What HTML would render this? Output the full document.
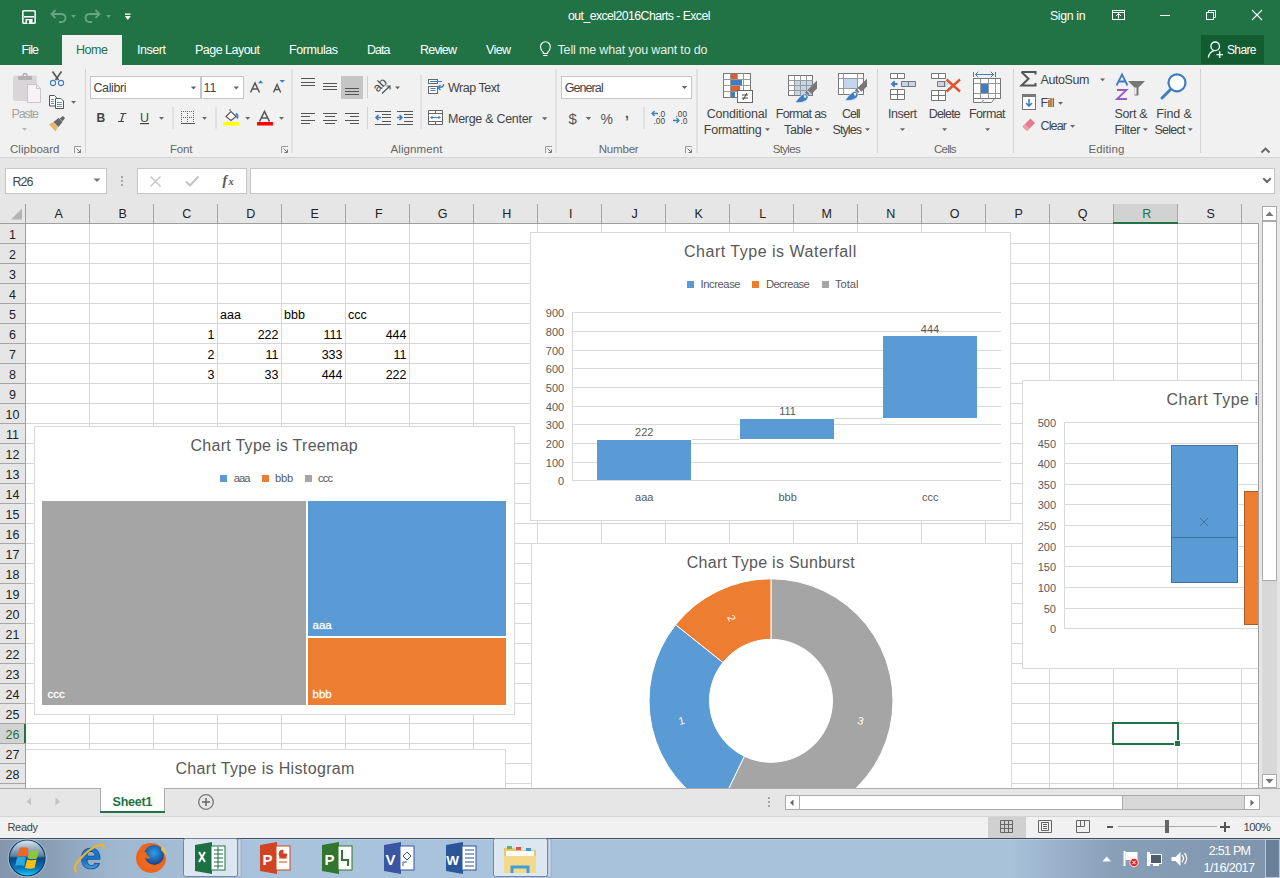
<!DOCTYPE html><html><head><meta charset="utf-8"><style>
*{margin:0;padding:0;box-sizing:border-box}
html,body{width:1280px;height:878px;overflow:hidden;background:#fff;font-family:"Liberation Sans",sans-serif;color:#444}
.a{position:absolute}
.t{position:absolute;white-space:nowrap;line-height:1}
</style></head><body><div class="a" style="left:0px;top:0px;width:1280px;height:65px;background:#217346"></div>
<div class="t" style="left:568.00px;top:10.00px;font-size:12.3px;color:#fff;letter-spacing:-0.568px;">out_excel2016Charts - Excel</div>
<div class="t" style="left:1050.00px;top:10.00px;font-size:12.3px;color:#fff;letter-spacing:-0.352px;">Sign in</div>
<div class="a" style="left:62px;top:35px;width:60px;height:30px;background:#f1f1f1"></div>
<div class="t" style="left:21.50px;top:44.00px;font-size:12.5px;color:#fff;letter-spacing:-0.881px;">File</div>
<div class="t" style="left:76.00px;top:44.00px;font-size:12.5px;color:#217346;letter-spacing:-0.448px;">Home</div>
<div class="t" style="left:137.00px;top:44.00px;font-size:12.5px;color:#fff;letter-spacing:-0.453px;">Insert</div>
<div class="t" style="left:195.00px;top:44.00px;font-size:12.5px;color:#fff;letter-spacing:-0.520px;">Page Layout</div>
<div class="t" style="left:289.00px;top:44.00px;font-size:12.5px;color:#fff;letter-spacing:-0.442px;">Formulas</div>
<div class="t" style="left:367.00px;top:44.00px;font-size:12.5px;color:#fff;letter-spacing:-0.968px;">Data</div>
<div class="t" style="left:420.00px;top:44.00px;font-size:12.5px;color:#fff;letter-spacing:-0.797px;">Review</div>
<div class="t" style="left:486.00px;top:44.00px;font-size:12.5px;color:#fff;letter-spacing:-0.623px;">View</div>
<div class="t" style="left:557.50px;top:44.00px;font-size:12.5px;color:#e6efe9;letter-spacing:-0.163px;">Tell me what you want to do</div>
<div class="a" style="left:1201px;top:35px;width:63px;height:29px;background:#115c31"></div>
<div class="t" style="left:1227.00px;top:44.00px;font-size:12px;color:#fff;letter-spacing:-0.631px;">Share</div>
<svg class="a" style="left:0;top:0" width="1280" height="65"><rect x="22.8" y="10.8" width="12.4" height="12.4" rx="1" fill="none" stroke="#fff" stroke-width="1.6"/><rect x="24" y="16" width="10" height="1.6" fill="#fff"/><rect x="25.5" y="19" width="7" height="4.5" fill="#fff"/><rect x="27" y="20.3" width="2" height="3.2" fill="#217346"/><path d="M52 14h9q4.5 0 4.5 4t-4.5 4h-2" stroke="#65a583" stroke-width="1.8" fill="none"/><path d="M55.5 10l-4 4l4 4" stroke="#65a583" stroke-width="1.8" fill="none"/><path d="M71 15h5l-2.5 3z" fill="#65a583"/><path d="M99 14h-9q-4.5 0-4.5 4t4.5 4h2" stroke="#65a583" stroke-width="1.8" fill="none"/><path d="M95.5 10l4 4l-4 4" stroke="#65a583" stroke-width="1.8" fill="none"/><path d="M106 15h5l-2.5 3z" fill="#65a583"/><rect x="125" y="13.5" width="5.5" height="1.3" fill="#fff"/><path d="M124.8 16h6l-3 4z" fill="#fff"/><path d="M543.3 52.5q-2.8-2.6-2.8-5.8a4.9 4.9 0 0 1 9.8 0q0 3.2-2.8 5.8v1h-4.2z" fill="none" stroke="#fff" stroke-width="1.1"/><path d="M543.3 55.5h4.2" stroke="#fff" stroke-width="1.1"/><rect x="1112.5" y="10.5" width="12" height="9" fill="none" stroke="#fff"/><rect x="1112" y="12" width="13" height="1" fill="#fff"/><path d="M1118.5 18.5v-5m-2.5 2.5l2.5-2.5l2.5 2.5" stroke="#fff" fill="none"/><rect x="1160" y="15" width="10" height="1" fill="#fff"/><rect x="1206.5" y="12.5" width="7" height="7" fill="none" stroke="#fff"/><path d="M1208.5 12.5v-2h7v7h-2" fill="none" stroke="#fff"/><path d="M1252 10l10 10M1262 10l-10 10" stroke="#fff" stroke-width="1.1"/><circle cx="1215.2" cy="46.3" r="4.3" fill="none" stroke="#fff" stroke-width="1.3"/><path d="M1208.3 57.6q0.8-5.5 5.8-7" fill="none" stroke="#fff" stroke-width="1.3"/><path d="M1216.5 54.6h6.5M1219.7 51.3v6.7" stroke="#fff" stroke-width="1.3"/></svg>
<div class="a" style="left:0px;top:65px;width:1280px;height:92px;background:#f1f1f1"></div>
<div class="a" style="left:0px;top:157px;width:1280px;height:1px;background:#d4d4d4"></div>
<svg class="a" style="left:0;top:0" width="1280" height="878"><rect x="85.0" y="69" width="1" height="84" fill="#d2d2d2"/><rect x="291.5" y="69" width="1" height="84" fill="#d2d2d2"/><rect x="555.5" y="69" width="1" height="84" fill="#d2d2d2"/><rect x="696.5" y="69" width="1" height="84" fill="#d2d2d2"/><rect x="877.0" y="69" width="1" height="84" fill="#d2d2d2"/><rect x="1013.0" y="69" width="1" height="84" fill="#d2d2d2"/><rect x="1200.0" y="69" width="1" height="84" fill="#d2d2d2"/><path d="M74.5 153v-6.5h6.5" stroke="#999" fill="none" stroke-width="1"/><path d="M76.5 148.5l4 4m0 -3v3h-3" stroke="#777" fill="none" stroke-width="1"/><path d="M281.5 153v-6.5h6.5" stroke="#999" fill="none" stroke-width="1"/><path d="M283.5 148.5l4 4m0 -3v3h-3" stroke="#777" fill="none" stroke-width="1"/><path d="M545.5 153v-6.5h6.5" stroke="#999" fill="none" stroke-width="1"/><path d="M547.5 148.5l4 4m0 -3v3h-3" stroke="#777" fill="none" stroke-width="1"/><path d="M685.5 153v-6.5h6.5" stroke="#999" fill="none" stroke-width="1"/><path d="M687.5 148.5l4 4m0 -3v3h-3" stroke="#777" fill="none" stroke-width="1"/><rect x="13" y="75.5" width="24" height="25.5" rx="2" fill="#d9d5d9"/><rect x="18" y="76" width="14" height="4" rx="1" fill="#b3b0b3"/><rect x="22.5" y="73" width="5" height="4" rx="1.5" fill="#b3b0b3"/><rect x="24" y="74.5" width="2" height="1.5" fill="#eee"/><path d="M27.5 84.5h9l4 4v14h-13z" fill="#f6f2f6" stroke="#c9c5c9" stroke-width="1"/><path d="M36.5 84.5v4h4" fill="none" stroke="#c9c5c9"/><path d="M22.00 128.00h5l-2.50 2.75z" fill="#b8b8b8"/><path d="M52.5 71.5L58.5 80M61.5 71.5L55.5 80" stroke="#555" stroke-width="1.6" fill="none"/><circle cx="53" cy="83" r="2.6" stroke="#3e7cc4" stroke-width="1.1" fill="none"/><circle cx="61" cy="83" r="2.6" stroke="#3e7cc4" stroke-width="1.1" fill="none"/><path d="M49.5 95.5h5l2 2v8.5h-7z" fill="#fff" stroke="#555"/><path d="M55.5 98.5h5.5l2.5 2.5v7.5h-8z" fill="#fff" stroke="#555"/><path d="M51 99.5h3M51 101.5h3M51 103.5h3M57 102.5h5M57 104.5h5M57 106.5h5" stroke="#3e7cc4" stroke-width="0.8"/><path d="M71.10 101.00h5l-2.50 2.75z" fill="#666"/><path d="M49 124.5l4-2.5l5 5l-2.5 4.5z" fill="#e7b66c"/><path d="M53.5 122l5-4l4 4l-4 5z" fill="#666"/><path d="M59.5 118.5l3.5-2.5l2 2l-2.5 3.5z" fill="#666"/><rect x="90.5" y="76.5" width="110" height="22" fill="#fff" stroke="#c6c6c6"/><rect x="201.5" y="76.5" width="42" height="22" fill="#fff" stroke="#c6c6c6"/><path d="M190.75 86.50h5.5l-2.75 3.03z" fill="#666"/><path d="M233.55 86.50h5.5l-2.75 3.03z" fill="#666"/><path d="M250.5 92.5l4.5-9.5l4.5 9.5M252.3 89h5.4" stroke="#555" stroke-width="1.5" fill="none"/><path d="M258 83.2l2.6-3l2.6 3z" fill="#3e7cc4"/><path d="M273.5 92.5l3.6-8l3.6 8M275 89.5h4.4" stroke="#555" stroke-width="1.4" fill="none"/><path d="M279.5 80h5.5l-2.75 2.8z" fill="#3e7cc4"/><path d="M120.5 113.5h6M118 121.5h6M123.5 113.5l-2.5 8" stroke="#444" stroke-width="1.2" fill="none"/><rect x="140" y="123" width="9" height="1.2" fill="#444"/><path d="M159.00 117.00h5l-2.50 2.75z" fill="#666"/><rect x="172.5" y="107" width="1" height="22" fill="#d2d2d2"/><rect x="215.5" y="107" width="1" height="22" fill="#d2d2d2"/><rect x="181" y="111" width="1" height="1" fill="#666"/><rect x="181" y="117" width="1" height="1" fill="#666"/><rect x="183" y="111" width="1" height="1" fill="#666"/><rect x="183" y="117" width="1" height="1" fill="#666"/><rect x="185" y="111" width="1" height="1" fill="#666"/><rect x="185" y="117" width="1" height="1" fill="#666"/><rect x="187" y="111" width="1" height="1" fill="#666"/><rect x="187" y="117" width="1" height="1" fill="#666"/><rect x="189" y="111" width="1" height="1" fill="#666"/><rect x="189" y="117" width="1" height="1" fill="#666"/><rect x="191" y="111" width="1" height="1" fill="#666"/><rect x="191" y="117" width="1" height="1" fill="#666"/><rect x="193" y="111" width="1" height="1" fill="#666"/><rect x="193" y="117" width="1" height="1" fill="#666"/><rect x="181" y="113" width="1" height="1" fill="#666"/><rect x="187" y="113" width="1" height="1" fill="#666"/><rect x="193" y="113" width="1" height="1" fill="#666"/><rect x="181" y="115" width="1" height="1" fill="#666"/><rect x="187" y="115" width="1" height="1" fill="#666"/><rect x="193" y="115" width="1" height="1" fill="#666"/><rect x="181" y="117" width="1" height="1" fill="#666"/><rect x="187" y="117" width="1" height="1" fill="#666"/><rect x="193" y="117" width="1" height="1" fill="#666"/><rect x="181" y="119" width="1" height="1" fill="#666"/><rect x="187" y="119" width="1" height="1" fill="#666"/><rect x="193" y="119" width="1" height="1" fill="#666"/><rect x="181" y="121" width="1" height="1" fill="#666"/><rect x="187" y="121" width="1" height="1" fill="#666"/><rect x="193" y="121" width="1" height="1" fill="#666"/><rect x="181" y="123" width="14" height="1" fill="#555"/><path d="M202.00 117.00h5l-2.50 2.75z" fill="#666"/><path d="M226 116.5l5-5l5 5l-5 4z" fill="#fff" stroke="#555" stroke-width="1.1"/><path d="M230 111v-2" stroke="#555"/><path d="M236 113.5q2.5 2 1 5" stroke="#3e7cc4" stroke-width="1.8" fill="none"/><rect x="223" y="122" width="16" height="3.5" fill="#ffff00"/><path d="M245.20 117.00h5l-2.50 2.75z" fill="#666"/><path d="M259.5 121.5l5-10l5 10M261.3 118h6.4" stroke="#555" stroke-width="1.6" fill="none"/><rect x="257" y="122" width="16" height="3.5" fill="#ff0000"/><path d="M279.00 117.00h5l-2.50 2.75z" fill="#666"/><rect x="301" y="78" width="14" height="1" fill="#555"/><rect x="301" y="82" width="14" height="1" fill="#555"/><rect x="301" y="85" width="14" height="1" fill="#555"/><rect x="323" y="83" width="14" height="1" fill="#555"/><rect x="323" y="86" width="14" height="1" fill="#555"/><rect x="323" y="89" width="14" height="1" fill="#555"/><rect x="341" y="76" width="22" height="23" fill="#c5c5c5"/><rect x="345" y="88" width="14" height="1" fill="#555"/><rect x="345" y="91" width="14" height="1" fill="#555"/><rect x="345" y="94" width="14" height="1" fill="#555"/><rect x="367" y="76" width="1" height="22" fill="#d2d2d2"/><text x="372.5" y="89" font-size="12.5" fill="#4a4a4a" transform="rotate(-45 379.5 84.5)" font-family="Liberation Sans">ab</text><path d="M382 93.5l8-7.5m-3.5 0h3.5v3.5" stroke="#555" stroke-width="1.2" fill="none"/><path d="M395.00 86.50h5l-2.50 2.75z" fill="#666"/><rect x="420.5" y="75" width="1" height="54" fill="#d2d2d2"/><rect x="428.5" y="79.5" width="9" height="4" fill="#fff" stroke="#666"/><rect x="428.5" y="86.5" width="9" height="7" fill="#fff" stroke="#666"/><path d="M430 81.5h12M430.5 88.5h5M430.5 90.5h5" stroke="#3e7cc4" stroke-width="1"/><path d="M443.5 84q0.5 3.5-5 3.5" stroke="#3e7cc4" stroke-width="1.3" fill="none"/><path d="M440.5 85l-2.7 2.5l2.7 2.5" stroke="#3e7cc4" stroke-width="1.3" fill="none"/><rect x="301" y="113" width="14" height="1" fill="#555"/><rect x="301" y="116" width="9" height="1" fill="#555"/><rect x="301" y="120" width="14" height="1" fill="#555"/><rect x="301" y="123" width="9" height="1" fill="#555"/><rect x="323" y="113" width="14" height="1" fill="#555"/><rect x="323" y="120" width="14" height="1" fill="#555"/><rect x="325" y="116" width="10" height="1" fill="#555"/><rect x="325" y="123" width="10" height="1" fill="#555"/><rect x="345" y="113" width="14" height="1" fill="#555"/><rect x="345" y="120" width="14" height="1" fill="#555"/><rect x="350" y="116" width="9" height="1" fill="#555"/><rect x="350" y="123" width="9" height="1" fill="#555"/><rect x="367" y="107" width="1" height="22" fill="#d2d2d2"/><rect x="375" y="111" width="16" height="1" fill="#555"/><rect x="375" y="124" width="16" height="1" fill="#555"/><rect x="382" y="114" width="9" height="1" fill="#555"/><rect x="382" y="117" width="9" height="1" fill="#555"/><rect x="382" y="121" width="9" height="1" fill="#555"/><path d="M381 117.5h-5m2.5-2.5l-2.5 2.5l2.5 2.5" stroke="#3e7cc4" stroke-width="1.6" fill="none"/><rect x="397" y="111" width="16" height="1" fill="#555"/><rect x="397" y="124" width="16" height="1" fill="#555"/><rect x="404" y="114" width="9" height="1" fill="#555"/><rect x="404" y="117" width="9" height="1" fill="#555"/><rect x="404" y="121" width="9" height="1" fill="#555"/><path d="M397 117.5h5m-2.5-2.5l2.5 2.5l-2.5 2.5" stroke="#3e7cc4" stroke-width="1.6" fill="none"/><path d="M428.5 110.5h14v14h-14zM428.5 113.5h14M428.5 121.5h14M435.5 110.5v3M435.5 121.5v3" fill="#fff" stroke="#666"/><path d="M430.5 117.5h10m-8-1.5l-1.5 1.5l1.5 1.5m6-3l1.5 1.5l-1.5 1.5" stroke="#3e7cc4" fill="none"/><path d="M541.95 117.20h5.5l-2.75 3.03z" fill="#666"/><rect x="561.5" y="76.5" width="130" height="22" fill="#fff" stroke="#c6c6c6"/><path d="M681.75 86.00h5.5l-2.75 3.03z" fill="#666"/><path d="M585.75 117.00h5.5l-2.75 3.03z" fill="#666"/><rect x="643.5" y="107" width="1" height="22" fill="#d2d2d2"/><text x="658.2" y="117.3" font-size="8.2" fill="#444" font-family="Liberation Sans" textLength="7" lengthAdjust="spacingAndGlyphs">.0</text><text x="653.5" y="124.3" font-size="8.2" fill="#444" font-family="Liberation Sans" textLength="11.5" lengthAdjust="spacingAndGlyphs">.00</text><path d="M658 113.5h-6m2.5-2.5l-2.5 2.5l2.5 2.5" stroke="#3e7cc4" stroke-width="1.3" fill="none"/><text x="675.5" y="117.3" font-size="8.2" fill="#444" font-family="Liberation Sans" textLength="11.5" lengthAdjust="spacingAndGlyphs">.00</text><text x="680.5" y="124.3" font-size="8.2" fill="#444" font-family="Liberation Sans" textLength="7" lengthAdjust="spacingAndGlyphs">.0</text><path d="M673 120.5h6m-2.5-2.5l2.5 2.5l-2.5 2.5" stroke="#3e7cc4" stroke-width="1.3" fill="none"/><rect x="723.5" y="73.5" width="27" height="24" fill="#fff" stroke="#777"/><path d="M730.5 73.5v24M737.5 73.5v24M743.5 73.5v24M723.5 79.5h27M723.5 85.5h27M723.5 91.5h27" stroke="#999" stroke-width="1"/><rect x="731" y="74" width="6" height="5" fill="#e05c35"/><rect x="731" y="80" width="11" height="5" fill="#3e7cc4"/><rect x="731" y="86" width="9" height="5" fill="#e05c35"/><rect x="731" y="92" width="4" height="5" fill="#3e7cc4"/><rect x="737.5" y="90.5" width="15" height="12" fill="#fff" stroke="#666"/><path d="M742 95h6M742 98h6M747 93l-4 7" stroke="#444" stroke-width="1"/><path d="M765.00 128.30h5l-2.50 2.75z" fill="#666"/><rect x="788.5" y="75.5" width="24" height="20" fill="#fff" stroke="#777"/><rect x="795" y="81" width="17" height="14" fill="#c3d6ec"/><path d="M794.5 75.5v20M800.5 75.5v20M806.5 75.5v20M788.5 80.5h24M788.5 85.5h24M788.5 90.5h24" stroke="#999"/><path d="M817 80.5v8l-5.5 5.5l-4-4z" fill="#777"/><path d="M806.5 91l3 3l-1.8 1.8l-3-3z" fill="#777"/><path d="M795 102.8q3.5-5.5 8-8.8q3-1 4.6 1q1.4 2.5-1 5.2q-4 3-11.6 2.6z" fill="#3e7cc4" stroke="#fff" stroke-width="0.6"/><path d="M803.5 95.5q2-0.8 3 0.5l-1.5 2.5z" fill="#fff"/><path d="M814.80 128.30h5l-2.50 2.75z" fill="#666"/><rect x="838.5" y="73.5" width="25" height="21" fill="#fff" stroke="#777"/><rect x="843" y="78" width="14" height="10" fill="#c3d6ec"/><path d="M843.5 73.5v21M857.5 73.5v21M838.5 78.5h25M838.5 88.5h25" stroke="#999"/><path d="M867 78.8v7.5l-5.5 5.5l-4-4z" fill="#777"/><path d="M856.5 88.8l3 3l-1.8 1.8l-3-3z" fill="#777"/><path d="M845 100.6q3.5-5.5 8-8.8q3-1 4.6 1q1.4 2.5-1 5.2q-4 3-11.6 2.6z" fill="#3e7cc4" stroke="#fff" stroke-width="0.6"/><path d="M853.5 93.3q2-0.8 3 0.5l-1.5 2.5z" fill="#fff"/><path d="M865.00 128.30h5l-2.50 2.75z" fill="#666"/><path d="M890.5 73.5h14v5h-14zM897.5 73.5v5" fill="#fff" stroke="#777"/><path d="M901.5 81.5h14v5h-14z" fill="#c3d6ec" stroke="#777"/><path d="M908.5 81.5v5" stroke="#777"/><path d="M897.5 84h-5.5m2.7-2.7l-2.7 2.7l2.7 2.7" stroke="#3e7cc4" stroke-width="1.9" fill="none"/><path d="M890.5 89.5h14v10h-14zM897.5 89.5v10M890.5 94.5h14" fill="#fff" stroke="#777"/><path d="M900.00 128.30h5l-2.50 2.75z" fill="#666"/><path d="M931.5 73.5h14v5h-14zM938.5 73.5v5" fill="#fff" stroke="#777"/><path d="M937.5 81.5h8l3.5 2.5l-3.5 2.5h-8z" fill="#c3d6ec"/><path d="M945.5 81.5h-8v5h8M944.5 81.5v5" fill="none" stroke="#777"/><path d="M931.5 90.5h14v10h-14zM938.5 90.5v10M931.5 95.5h14" fill="#fff" stroke="#777"/><path d="M946.5 79.5l13.5 12M960 79.5l-13.5 12" stroke="#d9552e" stroke-width="2.4" fill="none"/><path d="M942.10 128.30h5l-2.50 2.75z" fill="#666"/><path d="M973.5 72v5M995.5 72v5M975.5 74.5h18m-2.8-2.8l2.8 2.8l-2.8 2.8m-12.4-5.6l-2.8 2.8l2.8 2.8" stroke="#3e7cc4" stroke-width="1" fill="none"/><path d="M973.5 98.5v4h8l2-2.5h0M982.5 102.5h9l3-4" stroke="#777" fill="#fff"/><path d="M973.5 78.5h27v20h-27zM980.5 78.5v20M988.5 78.5v20M995.5 78.5v20M973.5 83.5h27M973.5 93.5h27" fill="#fff" stroke="#999"/><path d="M973.5 78.5h27v20h-27z" fill="none" stroke="#777"/><rect x="981" y="84" width="7" height="9" fill="#3e7cc4"/><path d="M985.10 128.30h5l-2.50 2.75z" fill="#666"/><path d="M1021.5 72h14v2.5M1021.5 72l7 6.8l-7 6.8h14v-2.5" stroke="#555" stroke-width="2" fill="none" stroke-linejoin="miter"/><path d="M1100.10 78.40h5l-2.50 2.75z" fill="#666"/><rect x="1022.5" y="94.5" width="13" height="15" fill="#fff" stroke="#777"/><rect x="1022" y="94" width="14" height="3" fill="#777"/><path d="M1029 99v7m-3-3l3 3l3-3" stroke="#3e7cc4" stroke-width="1.6" fill="none"/><path d="M1058.00 102.00h5l-2.50 2.75z" fill="#666"/><path d="M1022.5 126.5l8-8l4.5 4.5l-8 8z" fill="#e8788c"/><path d="M1022.5 126.5l2.5-2.5l4.5 4.5l-2.5 2.5z" fill="#f0a0b0"/><path d="M1070.10 125.00h5l-2.50 2.75z" fill="#666"/><path d="M1116.5 85.5l5.5-11l5.5 11M1118.5 81.5h7" stroke="#3e7cc4" stroke-width="1.8" fill="none"/><path d="M1117 90h9.5l-9.5 9h10" stroke="#9b59c6" stroke-width="1.8" fill="none"/><path d="M1128 81h17l-6.5 6.5v8h-4v-8z" fill="#777"/><path d="M1134.5 87.5v7h2v-7" fill="#f1f1f1"/><path d="M1142.80 128.30h5l-2.50 2.75z" fill="#666"/><circle cx="1177" cy="82.8" r="8.5" fill="#fff" stroke="#3e7cc4" stroke-width="2.2"/><path d="M1170.5 89.5l-8.5 8.5" stroke="#3e7cc4" stroke-width="3" stroke-linecap="round"/><path d="M1187.80 128.30h5l-2.50 2.75z" fill="#666"/><path d="M1261.5 152.5l4-4l4 4" stroke="#666" stroke-width="1.9" fill="none"/></svg>
<div class="t" style="left:11.50px;top:108.00px;font-size:12.5px;color:#a3a3a3;letter-spacing:-1.116px;">Paste</div>
<div class="t" style="left:10.00px;top:144.00px;font-size:11.5px;color:#666;letter-spacing:0.034px;">Clipboard</div>
<div class="t" style="left:93.50px;top:82.00px;font-size:12.5px;color:#444;letter-spacing:-0.404px;">Calibri</div>
<div class="t" style="left:203.50px;top:82.00px;font-size:12.5px;color:#444;">11</div>
<div class="t" style="left:96.50px;top:112.00px;font-size:12px;color:#444;font-weight:bold;">B</div>
<div class="t" style="left:140.00px;top:112.00px;font-size:12.5px;color:#444;">U</div>
<div class="t" style="left:170.00px;top:144.00px;font-size:11.5px;color:#666;letter-spacing:-0.171px;">Font</div>
<div class="t" style="left:448.00px;top:82.00px;font-size:12.5px;color:#444;letter-spacing:-0.476px;">Wrap Text</div>
<div class="t" style="left:448.00px;top:113.00px;font-size:12.5px;color:#444;letter-spacing:-0.287px;">Merge &amp; Center</div>
<div class="t" style="left:390.50px;top:144.00px;font-size:11.5px;color:#666;letter-spacing:0.108px;">Alignment</div>
<div class="t" style="left:564.70px;top:82.00px;font-size:12.5px;color:#444;letter-spacing:-0.912px;">General</div>
<div class="t" style="left:568.50px;top:111.00px;font-size:15px;color:#555;">$</div>
<div class="t" style="left:600.50px;top:112.00px;font-size:14px;color:#555;">%</div>
<div class="t" style="left:625.00px;top:106.00px;font-size:14px;color:#555;font-weight:bold;">,</div>
<div class="t" style="left:598.70px;top:144.00px;font-size:11.5px;color:#666;letter-spacing:-0.181px;">Number</div>
<div class="t" style="left:706.70px;top:108.00px;font-size:12.5px;color:#444;letter-spacing:-0.204px;">Conditional</div>
<div class="t" style="left:703.70px;top:124.00px;font-size:12.5px;color:#444;letter-spacing:-0.194px;">Formatting</div>
<div class="t" style="left:775.70px;top:108.00px;font-size:12.5px;color:#444;letter-spacing:-0.658px;">Format as</div>
<div class="t" style="left:784.00px;top:124.00px;font-size:12.5px;color:#444;letter-spacing:-0.346px;">Table</div>
<div class="t" style="left:842.00px;top:108.00px;font-size:12.5px;color:#444;letter-spacing:-1.011px;">Cell</div>
<div class="t" style="left:832.50px;top:124.00px;font-size:12.5px;color:#444;letter-spacing:-0.908px;">Styles</div>
<div class="t" style="left:772.70px;top:144.00px;font-size:11.5px;color:#666;letter-spacing:-0.663px;">Styles</div>
<div class="t" style="left:888.00px;top:108.00px;font-size:12.5px;color:#444;letter-spacing:-0.453px;">Insert</div>
<div class="t" style="left:928.80px;top:108.00px;font-size:12.5px;color:#444;letter-spacing:-0.827px;">Delete</div>
<div class="t" style="left:969.00px;top:108.00px;font-size:12.5px;color:#444;letter-spacing:-0.618px;">Format</div>
<div class="t" style="left:934.00px;top:144.00px;font-size:11.5px;color:#666;letter-spacing:-0.765px;">Cells</div>
<div class="t" style="left:1040.50px;top:74.00px;font-size:12.5px;color:#444;letter-spacing:-0.403px;">AutoSum</div>
<div class="t" style="left:1040.50px;top:97.00px;font-size:12.5px;color:#444;letter-spacing:-0.656px;">Fill</div>
<div class="t" style="left:1040.50px;top:120.00px;font-size:12.5px;color:#444;letter-spacing:-0.843px;">Clear</div>
<div class="t" style="left:1088.50px;top:144.00px;font-size:11.5px;color:#666;letter-spacing:0.139px;">Editing</div>
<div class="t" style="left:1114.50px;top:108.00px;font-size:12.5px;color:#444;letter-spacing:-0.347px;">Sort &amp;</div>
<div class="t" style="left:1114.50px;top:124.00px;font-size:12.5px;color:#444;letter-spacing:-0.356px;">Filter</div>
<div class="t" style="left:1156.30px;top:108.00px;font-size:12.5px;color:#444;letter-spacing:-0.126px;">Find &amp;</div>
<div class="t" style="left:1154.50px;top:124.00px;font-size:12.5px;color:#444;letter-spacing:-0.748px;">Select</div>
<div class="a" style="left:0px;top:158px;width:1280px;height:46px;background:#e6e6e6"></div>
<svg class="a" style="left:0;top:0" width="1280" height="210"><rect x="5.5" y="168.5" width="101" height="25" fill="#fff" stroke="#c6c6c6"/><path d="M93.5 178.5h7l-3.5 3.5z" fill="#777"/><rect x="121" y="176" width="2" height="2" fill="#a6a6a6"/><rect x="121" y="180" width="2" height="2" fill="#a6a6a6"/><rect x="121" y="184" width="2" height="2" fill="#a6a6a6"/><rect x="137.5" y="168.5" width="109" height="25" fill="#fff" stroke="#c6c6c6"/><path d="M150.5 176.5l10 10M160.5 176.5l-10 10" stroke="#c4c4c4" stroke-width="1.4"/><path d="M186 181.5l4 4l8.5-9" stroke="#c4c4c4" stroke-width="2" fill="none"/><rect x="250.5" y="168.5" width="1024" height="25" fill="#fff" stroke="#c6c6c6"/><path d="M1263.3 178.3l3.7 3.7l3.7-3.7" stroke="#666" stroke-width="2" fill="none"/></svg>
<div class="t" style="left:12.50px;top:176.00px;font-size:12.5px;color:#444;letter-spacing:-0.966px;">R26</div>
<div class="t" style="left:222.50px;top:174.00px;font-size:14px;color:#555;font-weight:bold;font-style:italic;font-family:Liberation Serif">f</div>
<div class="t" style="left:228.50px;top:177.00px;font-size:10.5px;color:#555;font-weight:bold;font-style:italic;font-family:Liberation Serif">x</div>
<div class="a" style="left:0px;top:204px;width:1258px;height:20px;background:#e6e6e6"></div>
<div class="a" style="left:0px;top:224px;width:25px;height:564px;background:#e6e6e6"></div>
<div class="a" style="left:25px;top:224px;width:1233px;height:564px;background:#fff"></div>
<div class="a" style="left:1113px;top:204px;width:65px;height:19px;background:#d2d2d2"></div>
<div class="a" style="left:0px;top:724px;width:25px;height:19px;background:#d2d2d2"></div>
<svg class="a" style="left:0;top:0" width="1280" height="878"><rect x="89" y="224" width="1" height="564" fill="#d6d6d6"/><rect x="89" y="204" width="1" height="19" fill="#a6a6a6"/><rect x="153" y="224" width="1" height="564" fill="#d6d6d6"/><rect x="153" y="204" width="1" height="19" fill="#a6a6a6"/><rect x="217" y="224" width="1" height="564" fill="#d6d6d6"/><rect x="217" y="204" width="1" height="19" fill="#a6a6a6"/><rect x="281" y="224" width="1" height="564" fill="#d6d6d6"/><rect x="281" y="204" width="1" height="19" fill="#a6a6a6"/><rect x="345" y="224" width="1" height="564" fill="#d6d6d6"/><rect x="345" y="204" width="1" height="19" fill="#a6a6a6"/><rect x="409" y="224" width="1" height="564" fill="#d6d6d6"/><rect x="409" y="204" width="1" height="19" fill="#a6a6a6"/><rect x="473" y="224" width="1" height="564" fill="#d6d6d6"/><rect x="473" y="204" width="1" height="19" fill="#a6a6a6"/><rect x="537" y="224" width="1" height="564" fill="#d6d6d6"/><rect x="537" y="204" width="1" height="19" fill="#a6a6a6"/><rect x="601" y="224" width="1" height="564" fill="#d6d6d6"/><rect x="601" y="204" width="1" height="19" fill="#a6a6a6"/><rect x="665" y="224" width="1" height="564" fill="#d6d6d6"/><rect x="665" y="204" width="1" height="19" fill="#a6a6a6"/><rect x="729" y="224" width="1" height="564" fill="#d6d6d6"/><rect x="729" y="204" width="1" height="19" fill="#a6a6a6"/><rect x="793" y="224" width="1" height="564" fill="#d6d6d6"/><rect x="793" y="204" width="1" height="19" fill="#a6a6a6"/><rect x="857" y="224" width="1" height="564" fill="#d6d6d6"/><rect x="857" y="204" width="1" height="19" fill="#a6a6a6"/><rect x="921" y="224" width="1" height="564" fill="#d6d6d6"/><rect x="921" y="204" width="1" height="19" fill="#a6a6a6"/><rect x="985" y="224" width="1" height="564" fill="#d6d6d6"/><rect x="985" y="204" width="1" height="19" fill="#a6a6a6"/><rect x="1049" y="224" width="1" height="564" fill="#d6d6d6"/><rect x="1049" y="204" width="1" height="19" fill="#a6a6a6"/><rect x="1113" y="224" width="1" height="564" fill="#d6d6d6"/><rect x="1113" y="204" width="1" height="19" fill="#a6a6a6"/><rect x="1177" y="224" width="1" height="564" fill="#d6d6d6"/><rect x="1177" y="204" width="1" height="19" fill="#a6a6a6"/><rect x="1241" y="224" width="1" height="564" fill="#d6d6d6"/><rect x="1241" y="204" width="1" height="19" fill="#a6a6a6"/><rect x="25" y="243" width="1233" height="1" fill="#d6d6d6"/><rect x="0" y="243" width="25" height="1" fill="#a6a6a6"/><rect x="25" y="263" width="1233" height="1" fill="#d6d6d6"/><rect x="0" y="263" width="25" height="1" fill="#a6a6a6"/><rect x="25" y="283" width="1233" height="1" fill="#d6d6d6"/><rect x="0" y="283" width="25" height="1" fill="#a6a6a6"/><rect x="25" y="303" width="1233" height="1" fill="#d6d6d6"/><rect x="0" y="303" width="25" height="1" fill="#a6a6a6"/><rect x="25" y="323" width="1233" height="1" fill="#d6d6d6"/><rect x="0" y="323" width="25" height="1" fill="#a6a6a6"/><rect x="25" y="343" width="1233" height="1" fill="#d6d6d6"/><rect x="0" y="343" width="25" height="1" fill="#a6a6a6"/><rect x="25" y="363" width="1233" height="1" fill="#d6d6d6"/><rect x="0" y="363" width="25" height="1" fill="#a6a6a6"/><rect x="25" y="383" width="1233" height="1" fill="#d6d6d6"/><rect x="0" y="383" width="25" height="1" fill="#a6a6a6"/><rect x="25" y="403" width="1233" height="1" fill="#d6d6d6"/><rect x="0" y="403" width="25" height="1" fill="#a6a6a6"/><rect x="25" y="423" width="1233" height="1" fill="#d6d6d6"/><rect x="0" y="423" width="25" height="1" fill="#a6a6a6"/><rect x="25" y="443" width="1233" height="1" fill="#d6d6d6"/><rect x="0" y="443" width="25" height="1" fill="#a6a6a6"/><rect x="25" y="463" width="1233" height="1" fill="#d6d6d6"/><rect x="0" y="463" width="25" height="1" fill="#a6a6a6"/><rect x="25" y="483" width="1233" height="1" fill="#d6d6d6"/><rect x="0" y="483" width="25" height="1" fill="#a6a6a6"/><rect x="25" y="503" width="1233" height="1" fill="#d6d6d6"/><rect x="0" y="503" width="25" height="1" fill="#a6a6a6"/><rect x="25" y="523" width="1233" height="1" fill="#d6d6d6"/><rect x="0" y="523" width="25" height="1" fill="#a6a6a6"/><rect x="25" y="543" width="1233" height="1" fill="#d6d6d6"/><rect x="0" y="543" width="25" height="1" fill="#a6a6a6"/><rect x="25" y="563" width="1233" height="1" fill="#d6d6d6"/><rect x="0" y="563" width="25" height="1" fill="#a6a6a6"/><rect x="25" y="583" width="1233" height="1" fill="#d6d6d6"/><rect x="0" y="583" width="25" height="1" fill="#a6a6a6"/><rect x="25" y="603" width="1233" height="1" fill="#d6d6d6"/><rect x="0" y="603" width="25" height="1" fill="#a6a6a6"/><rect x="25" y="623" width="1233" height="1" fill="#d6d6d6"/><rect x="0" y="623" width="25" height="1" fill="#a6a6a6"/><rect x="25" y="643" width="1233" height="1" fill="#d6d6d6"/><rect x="0" y="643" width="25" height="1" fill="#a6a6a6"/><rect x="25" y="663" width="1233" height="1" fill="#d6d6d6"/><rect x="0" y="663" width="25" height="1" fill="#a6a6a6"/><rect x="25" y="683" width="1233" height="1" fill="#d6d6d6"/><rect x="0" y="683" width="25" height="1" fill="#a6a6a6"/><rect x="25" y="703" width="1233" height="1" fill="#d6d6d6"/><rect x="0" y="703" width="25" height="1" fill="#a6a6a6"/><rect x="25" y="723" width="1233" height="1" fill="#d6d6d6"/><rect x="0" y="723" width="25" height="1" fill="#a6a6a6"/><rect x="25" y="743" width="1233" height="1" fill="#d6d6d6"/><rect x="0" y="743" width="25" height="1" fill="#a6a6a6"/><rect x="25" y="763" width="1233" height="1" fill="#d6d6d6"/><rect x="0" y="763" width="25" height="1" fill="#a6a6a6"/><rect x="25" y="783" width="1233" height="1" fill="#d6d6d6"/><rect x="0" y="783" width="25" height="1" fill="#a6a6a6"/><rect x="0" y="223" width="1258" height="1" fill="#9f9f9f"/><rect x="25" y="204" width="1" height="584" fill="#9f9f9f"/><rect x="1258" y="223" width="1" height="565" fill="#ababab"/><path d="M11 219.5h11v-11z" fill="#b4b4b4"/><rect x="1113" y="222" width="65" height="2" fill="#217346"/><rect x="24" y="724" width="2" height="19" fill="#217346"/></svg>
<div class="t" style="left:54.53px;top:208.00px;font-size:12.5px;color:#222;">A</div>
<div class="t" style="left:118.53px;top:208.00px;font-size:12.5px;color:#222;">B</div>
<div class="t" style="left:182.19px;top:208.00px;font-size:12.5px;color:#222;">C</div>
<div class="t" style="left:246.19px;top:208.00px;font-size:12.5px;color:#222;">D</div>
<div class="t" style="left:310.53px;top:208.00px;font-size:12.5px;color:#222;">E</div>
<div class="t" style="left:374.88px;top:208.00px;font-size:12.5px;color:#222;">F</div>
<div class="t" style="left:437.84px;top:208.00px;font-size:12.5px;color:#222;">G</div>
<div class="t" style="left:502.19px;top:208.00px;font-size:12.5px;color:#222;">H</div>
<div class="t" style="left:568.96px;top:208.00px;font-size:12.5px;color:#222;">I</div>
<div class="t" style="left:631.58px;top:208.00px;font-size:12.5px;color:#222;">J</div>
<div class="t" style="left:694.53px;top:208.00px;font-size:12.5px;color:#222;">K</div>
<div class="t" style="left:759.22px;top:208.00px;font-size:12.5px;color:#222;">L</div>
<div class="t" style="left:821.49px;top:208.00px;font-size:12.5px;color:#222;">M</div>
<div class="t" style="left:886.19px;top:208.00px;font-size:12.5px;color:#222;">N</div>
<div class="t" style="left:949.84px;top:208.00px;font-size:12.5px;color:#222;">O</div>
<div class="t" style="left:1014.53px;top:208.00px;font-size:12.5px;color:#222;">P</div>
<div class="t" style="left:1077.84px;top:208.00px;font-size:12.5px;color:#222;">Q</div>
<div class="t" style="left:1142.19px;top:208.00px;font-size:12.5px;color:#217346;">R</div>
<div class="t" style="left:1206.53px;top:208.00px;font-size:12.5px;color:#222;">S</div>
<div class="t" style="left:9.02px;top:229.00px;font-size:12.5px;color:#222;">1</div>
<div class="t" style="left:9.02px;top:249.00px;font-size:12.5px;color:#222;">2</div>
<div class="t" style="left:9.02px;top:269.00px;font-size:12.5px;color:#222;">3</div>
<div class="t" style="left:9.02px;top:289.00px;font-size:12.5px;color:#222;">4</div>
<div class="t" style="left:9.02px;top:309.00px;font-size:12.5px;color:#222;">5</div>
<div class="t" style="left:9.02px;top:329.00px;font-size:12.5px;color:#222;">6</div>
<div class="t" style="left:9.02px;top:349.00px;font-size:12.5px;color:#222;">7</div>
<div class="t" style="left:9.02px;top:369.00px;font-size:12.5px;color:#222;">8</div>
<div class="t" style="left:9.02px;top:389.00px;font-size:12.5px;color:#222;">9</div>
<div class="t" style="left:5.55px;top:409.00px;font-size:12.5px;color:#222;">10</div>
<div class="t" style="left:6.01px;top:429.00px;font-size:12.5px;color:#222;">11</div>
<div class="t" style="left:5.55px;top:449.00px;font-size:12.5px;color:#222;">12</div>
<div class="t" style="left:5.55px;top:469.00px;font-size:12.5px;color:#222;">13</div>
<div class="t" style="left:5.55px;top:489.00px;font-size:12.5px;color:#222;">14</div>
<div class="t" style="left:5.55px;top:509.00px;font-size:12.5px;color:#222;">15</div>
<div class="t" style="left:5.55px;top:529.00px;font-size:12.5px;color:#222;">16</div>
<div class="t" style="left:5.55px;top:549.00px;font-size:12.5px;color:#222;">17</div>
<div class="t" style="left:5.55px;top:569.00px;font-size:12.5px;color:#222;">18</div>
<div class="t" style="left:5.55px;top:589.00px;font-size:12.5px;color:#222;">19</div>
<div class="t" style="left:5.55px;top:609.00px;font-size:12.5px;color:#222;">20</div>
<div class="t" style="left:5.55px;top:629.00px;font-size:12.5px;color:#222;">21</div>
<div class="t" style="left:5.55px;top:649.00px;font-size:12.5px;color:#222;">22</div>
<div class="t" style="left:5.55px;top:669.00px;font-size:12.5px;color:#222;">23</div>
<div class="t" style="left:5.55px;top:689.00px;font-size:12.5px;color:#222;">24</div>
<div class="t" style="left:5.55px;top:709.00px;font-size:12.5px;color:#222;">25</div>
<div class="t" style="left:5.55px;top:729.00px;font-size:12.5px;color:#217346;">26</div>
<div class="t" style="left:5.55px;top:749.00px;font-size:12.5px;color:#222;">27</div>
<div class="t" style="left:5.55px;top:769.00px;font-size:12.5px;color:#222;">28</div>
<div class="t" style="left:220.00px;top:309.00px;font-size:12.5px;color:#000;">aaa</div>
<div class="t" style="left:284.00px;top:309.00px;font-size:12.5px;color:#000;">bbb</div>
<div class="t" style="left:348.00px;top:309.00px;font-size:12.5px;color:#000;">ccc</div>
<div class="t" style="left:207.55px;top:329.00px;font-size:12.5px;color:#000;">1</div>
<div class="t" style="left:257.64px;top:329.00px;font-size:12.5px;color:#000;">222</div>
<div class="t" style="left:323.50px;top:329.00px;font-size:12.5px;color:#000;">111</div>
<div class="t" style="left:385.64px;top:329.00px;font-size:12.5px;color:#000;">444</div>
<div class="t" style="left:207.55px;top:349.00px;font-size:12.5px;color:#000;">2</div>
<div class="t" style="left:265.52px;top:349.00px;font-size:12.5px;color:#000;">11</div>
<div class="t" style="left:321.64px;top:349.00px;font-size:12.5px;color:#000;">333</div>
<div class="t" style="left:393.52px;top:349.00px;font-size:12.5px;color:#000;">11</div>
<div class="t" style="left:207.55px;top:369.00px;font-size:12.5px;color:#000;">3</div>
<div class="t" style="left:264.60px;top:369.00px;font-size:12.5px;color:#000;">33</div>
<div class="t" style="left:321.64px;top:369.00px;font-size:12.5px;color:#000;">444</div>
<div class="t" style="left:385.64px;top:369.00px;font-size:12.5px;color:#000;">222</div>
<svg class="a" style="left:0;top:0" width="1280" height="878"><rect x="530.5" y="232.5" width="480" height="288" fill="#fff" stroke="#d9d9d9"/><rect x="573" y="480" width="428" height="1" fill="#d9d9d9"/><rect x="573" y="462" width="428" height="1" fill="#d9d9d9"/><rect x="573" y="443" width="428" height="1" fill="#d9d9d9"/><rect x="573" y="424" width="428" height="1" fill="#d9d9d9"/><rect x="573" y="406" width="428" height="1" fill="#d9d9d9"/><rect x="573" y="387" width="428" height="1" fill="#d9d9d9"/><rect x="573" y="368" width="428" height="1" fill="#d9d9d9"/><rect x="573" y="350" width="428" height="1" fill="#d9d9d9"/><rect x="573" y="331" width="428" height="1" fill="#d9d9d9"/><rect x="573" y="312" width="428" height="1" fill="#d9d9d9"/><rect x="572" y="312" width="1" height="169" fill="#d9d9d9"/><rect x="692" y="439" width="47" height="1" fill="#d6d6d6"/><rect x="835" y="418" width="47" height="1" fill="#d6d6d6"/><rect x="597" y="440" width="94" height="40" fill="#5b9bd5"/><rect x="740" y="419" width="94" height="20" fill="#5b9bd5"/><rect x="883" y="336" width="94" height="82" fill="#5b9bd5"/><rect x="687" y="281" width="7" height="7" fill="#5b9bd5"/><rect x="752" y="281" width="7" height="7" fill="#ed7d31"/><rect x="822" y="281" width="7" height="7" fill="#a5a5a5"/><rect x="1022.5" y="380.5" width="480" height="288" fill="#fff" stroke="#d9d9d9"/><rect x="1065" y="628" width="200" height="1" fill="#d9d9d9"/><rect x="1065" y="608" width="200" height="1" fill="#d9d9d9"/><rect x="1065" y="587" width="200" height="1" fill="#d9d9d9"/><rect x="1065" y="566" width="200" height="1" fill="#d9d9d9"/><rect x="1065" y="546" width="200" height="1" fill="#d9d9d9"/><rect x="1065" y="525" width="200" height="1" fill="#d9d9d9"/><rect x="1065" y="504" width="200" height="1" fill="#d9d9d9"/><rect x="1065" y="484" width="200" height="1" fill="#d9d9d9"/><rect x="1065" y="463" width="200" height="1" fill="#d9d9d9"/><rect x="1065" y="443" width="200" height="1" fill="#d9d9d9"/><rect x="1065" y="422" width="200" height="1" fill="#d9d9d9"/><rect x="1064" y="422" width="1" height="207" fill="#d9d9d9"/><rect x="1171.5" y="445.5" width="66" height="137" fill="#5b9bd5" stroke="#41719c"/><rect x="1172" y="537" width="65" height="1" fill="#41719c"/><path d="M1200 518l8 8M1208 518l-8 8" stroke="#41719c" stroke-width="1"/><rect x="1244.5" y="491.5" width="66" height="133" fill="#ed7d31" stroke="#ae5a21"/><rect x="34.5" y="426.5" width="480" height="288" fill="#fff" stroke="#d9d9d9"/><rect x="42" y="501" width="264" height="204" fill="#a5a5a5"/><rect x="308" y="501" width="198" height="135" fill="#5b9bd5"/><rect x="308" y="638" width="198" height="67" fill="#ed7d31"/><rect x="220" y="475" width="7" height="7" fill="#5b9bd5"/><rect x="262" y="475" width="7" height="7" fill="#ed7d31"/><rect x="305" y="475" width="7" height="7" fill="#a5a5a5"/><rect x="531.5" y="543.5" width="480" height="288" fill="#fff" stroke="#d9d9d9"/><path d="M771.00 578.80A122 122 0 1 1 718.07 810.72L744.32 756.21A61.5 61.5 0 1 0 771.00 639.30Z" fill="#a5a5a5" stroke="#fff" stroke-width="1"/><path d="M718.07 810.72A122 122 0 0 1 675.62 624.73L722.92 662.46A61.5 61.5 0 0 0 744.32 756.21Z" fill="#5b9bd5" stroke="#fff" stroke-width="1"/><path d="M675.62 624.73A122 122 0 0 1 771.00 578.80L771.00 639.30A61.5 61.5 0 0 0 722.92 662.46Z" fill="#ed7d31" stroke="#fff" stroke-width="1"/><text x="860.45" y="724.42" font-size="10.5" fill="#fff" text-anchor="middle" font-family="Liberation Sans" transform="rotate(12.9 860.45 721.22)">3</text><text x="681.55" y="724.42" font-size="10.5" fill="#fff" text-anchor="middle" font-family="Liberation Sans" transform="rotate(-12.9 681.55 721.22)">1</text><text x="731.19" y="621.34" font-size="10.5" fill="#fff" text-anchor="middle" font-family="Liberation Sans" transform="rotate(64.3 731.19 618.14)">2</text><rect x="25.5" y="749.5" width="480" height="288" fill="#fff" stroke="#d9d9d9"/></svg>
<div class="t" style="left:684.00px;top:244.00px;font-size:16px;color:#595959;letter-spacing:0.511px;">Chart Type is Waterfall</div>
<div class="t" style="left:700.50px;top:279.00px;font-size:11.2px;color:#595959;letter-spacing:-0.408px;">Increase</div>
<div class="t" style="left:766.00px;top:279.00px;font-size:11.2px;color:#595959;letter-spacing:-0.591px;">Decrease</div>
<div class="t" style="left:835.00px;top:279.00px;font-size:11.2px;color:#595959;letter-spacing:-0.040px;">Total</div>
<div class="t" style="left:558.08px;top:476.00px;font-size:11px;color:#595959;">0</div>
<div class="t" style="left:545.85px;top:458.00px;font-size:11px;color:#595959;">100</div>
<div class="t" style="left:545.85px;top:439.00px;font-size:11px;color:#595959;">200</div>
<div class="t" style="left:545.85px;top:420.00px;font-size:11px;color:#595959;">300</div>
<div class="t" style="left:545.85px;top:402.00px;font-size:11px;color:#595959;">400</div>
<div class="t" style="left:545.85px;top:383.00px;font-size:11px;color:#595959;">500</div>
<div class="t" style="left:545.85px;top:364.00px;font-size:11px;color:#595959;">600</div>
<div class="t" style="left:545.85px;top:346.00px;font-size:11px;color:#595959;">700</div>
<div class="t" style="left:545.85px;top:327.00px;font-size:11px;color:#595959;">800</div>
<div class="t" style="left:545.85px;top:308.00px;font-size:11px;color:#595959;">900</div>
<div class="t" style="left:635.02px;top:427.00px;font-size:11px;color:#595959;">222</div>
<div class="t" style="left:779.14px;top:406.00px;font-size:11px;color:#595959;">111</div>
<div class="t" style="left:920.82px;top:324.00px;font-size:11px;color:#595959;">444</div>
<div class="t" style="left:635.02px;top:492.00px;font-size:11px;color:#595959;">aaa</div>
<div class="t" style="left:778.42px;top:492.00px;font-size:11px;color:#595959;">bbb</div>
<div class="t" style="left:921.95px;top:492.00px;font-size:11px;color:#595959;">ccc</div>
<div class="t" style="left:1166.50px;top:392.00px;font-size:16px;color:#595959;letter-spacing:0.5px">Chart Type is Box &amp; Whisker</div>
<div class="t" style="left:1049.88px;top:624.00px;font-size:11px;color:#595959;">0</div>
<div class="t" style="left:1043.76px;top:604.00px;font-size:11px;color:#595959;">50</div>
<div class="t" style="left:1037.65px;top:583.00px;font-size:11px;color:#595959;">100</div>
<div class="t" style="left:1037.65px;top:562.00px;font-size:11px;color:#595959;">150</div>
<div class="t" style="left:1037.65px;top:542.00px;font-size:11px;color:#595959;">200</div>
<div class="t" style="left:1037.65px;top:521.00px;font-size:11px;color:#595959;">250</div>
<div class="t" style="left:1037.65px;top:500.00px;font-size:11px;color:#595959;">300</div>
<div class="t" style="left:1037.65px;top:480.00px;font-size:11px;color:#595959;">350</div>
<div class="t" style="left:1037.65px;top:459.00px;font-size:11px;color:#595959;">400</div>
<div class="t" style="left:1037.65px;top:439.00px;font-size:11px;color:#595959;">450</div>
<div class="t" style="left:1037.65px;top:418.00px;font-size:11px;color:#595959;">500</div>
<div class="t" style="left:190.45px;top:438.00px;font-size:16px;color:#595959;letter-spacing:0.287px;">Chart Type is Treemap</div>
<div class="t" style="left:233.80px;top:473.00px;font-size:11.2px;color:#595959;letter-spacing:-0.994px;">aaa</div>
<div class="t" style="left:275.00px;top:473.00px;font-size:11.2px;color:#595959;letter-spacing:-0.244px;">bbb</div>
<div class="t" style="left:318.00px;top:473.00px;font-size:11.2px;color:#595959;letter-spacing:-0.900px;">ccc</div>
<div class="t" style="left:47.50px;top:689.00px;font-size:11.5px;color:#fff;-webkit-text-stroke:0.3px #fff">ccc</div>
<div class="t" style="left:312.50px;top:620.00px;font-size:11.5px;color:#fff;-webkit-text-stroke:0.3px #fff">aaa</div>
<div class="t" style="left:312.50px;top:689.00px;font-size:11.5px;color:#fff;-webkit-text-stroke:0.3px #fff">bbb</div>
<div class="t" style="left:686.80px;top:555.00px;font-size:16px;color:#595959;letter-spacing:0.264px;">Chart Type is Sunburst</div>
<div class="t" style="left:175.40px;top:761.00px;font-size:16px;color:#595959;letter-spacing:0.349px;">Chart Type is Histogram</div>
<svg class="a" style="left:0;top:0" width="1280" height="878"><rect x="25" y="744" width="1" height="44" fill="#9f9f9f"/><path d="M1113 723h65v21h-4M1113 723v21h61" fill="none" stroke="#217346" stroke-width="2"/><rect x="1112" y="722" width="2" height="23" fill="#217346"/><rect x="1112" y="722" width="67" height="2" fill="#217346"/><rect x="1177" y="722" width="2" height="18" fill="#217346"/><rect x="1112" y="743" width="62" height="2" fill="#217346"/><rect x="1174" y="740" width="7" height="7" fill="#fff"/><rect x="1175" y="741" width="5" height="5" fill="#217346"/><rect x="1258" y="204" width="22" height="584" fill="#e6e6e6"/><rect x="1262.5" y="206.5" width="14" height="14" fill="#fff" stroke="#ababab"/><path d="M1265.5 216h8l-4-4.5z" fill="#777"/><rect x="1262" y="221" width="15" height="554" fill="#d8d8d8"/><rect x="1262.5" y="221.5" width="14" height="359" fill="#fff" stroke="#ababab"/><rect x="1262.5" y="774.5" width="14" height="13" fill="#fff" stroke="#ababab"/><path d="M1265.5 779h8l-4 4.5z" fill="#777"/><rect x="1258" y="223" width="1" height="565" fill="#9f9f9f"/><rect x="0" y="788" width="1280" height="29" fill="#e6e6e6"/><rect x="0" y="788" width="1280" height="1" fill="#ababab"/><rect x="0" y="816" width="1280" height="1" fill="#d4d4d4"/><rect x="100" y="788" width="65" height="25" fill="#fff"/><rect x="100" y="788" width="1" height="24" fill="#ababab"/><rect x="164" y="788" width="1" height="24" fill="#ababab"/><rect x="100" y="811" width="65" height="2" fill="#217346"/><path d="M31 797.5v8l-4.5-4z" fill="#c4c4c4"/><path d="M55.5 797.5v8l4.5-4z" fill="#c4c4c4"/><circle cx="206" cy="802" r="7.3" fill="none" stroke="#777" stroke-width="1.3"/><path d="M206 798v8M202 802h8" stroke="#666" stroke-width="1.5"/><rect x="768" y="797" width="2" height="2" fill="#a6a6a6"/><rect x="768" y="801" width="2" height="2" fill="#a6a6a6"/><rect x="768" y="805" width="2" height="2" fill="#a6a6a6"/><rect x="785.5" y="795.5" width="474" height="14" fill="#d8d8d8" stroke="#ababab"/><rect x="785.5" y="795.5" width="14" height="14" fill="#fff" stroke="#ababab"/><path d="M793.5 799.5v6.5l-3.5-3.25z" fill="#666"/><rect x="799.5" y="795.5" width="323" height="14" fill="#fff" stroke="#ababab"/><rect x="1244.5" y="795.5" width="15" height="14" fill="#fff" stroke="#ababab"/><path d="M1250.5 799.5v6.5l3.5-3.25z" fill="#666"/><rect x="0" y="817" width="1280" height="21" fill="#f1f1f1"/><rect x="988" y="817" width="38" height="21" fill="#d0d0d0"/><path d="M1000.5 820.5h12v12h-12zM1000.5 824.5h12M1000.5 828.5h12M1004.5 820.5v12M1008.5 820.5v12" fill="none" stroke="#666"/><path d="M1038.5 820.5h13v12h-13z" fill="none" stroke="#666"/><path d="M1041.5 822.5h7v8h-7z" fill="none" stroke="#666"/><path d="M1043 824.5h4M1043 826.5h4M1043 828.5h4" stroke="#666"/><path d="M1076.5 820.5h13v12h-13zM1076.5 826.5h8v-6M1080.5 820.5v6" fill="none" stroke="#666"/><rect x="1107" y="826" width="6" height="2" fill="#555"/><rect x="1118" y="826" width="99" height="1" fill="#aaa"/><rect x="1165" y="820" width="4" height="13" fill="#666"/><rect x="1220" y="826" width="10" height="2" fill="#555"/><rect x="1224" y="822" width="2" height="10" fill="#555"/><defs><linearGradient id="tb" x1="0" y1="0" x2="1" y2="0"><stop offset="0" stop-color="#8396ad"/><stop offset="0.04" stop-color="#8a9fb6"/><stop offset="0.09" stop-color="#9fb8d0"/><stop offset="0.2" stop-color="#a9c3dc"/><stop offset="0.79" stop-color="#a8c2da"/><stop offset="0.87" stop-color="#889fb8"/><stop offset="1" stop-color="#7e94ac"/></linearGradient><radialGradient id="orb" cx="0.5" cy="0.35" r="0.6"><stop offset="0" stop-color="#7ec9f0"/><stop offset="0.6" stop-color="#1f6fb0"/><stop offset="1" stop-color="#0c3e6e"/></radialGradient></defs><rect x="0" y="838" width="1280" height="40" fill="url(#tb)"/><rect x="0" y="838" width="1280" height="1" fill="#3d4e60"/><rect x="0" y="839" width="1280" height="1" fill="#c5d5e5" opacity="0.7"/><defs><linearGradient id="orb2" x1="0" y1="0" x2="0" y2="1"><stop offset="0" stop-color="#dfe8f0"/><stop offset="0.45" stop-color="#5a7e9e"/><stop offset="0.5" stop-color="#08457e"/><stop offset="0.8" stop-color="#0a78c0"/><stop offset="1" stop-color="#18d8f8"/></linearGradient></defs><circle cx="27.2" cy="858" r="18" fill="url(#orb2)" stroke="#0b3a66" stroke-width="1.2"/><circle cx="27.2" cy="858" r="19" fill="none" stroke="#c8d4e0" stroke-width="0.8" opacity="0.8"/><path d="M19.5 848q4-1.5 9 0l-1.8 8.5q-4.5-1.5-9 0z" fill="#f26522"/><path d="M29.5 850q4.5 1.5 9.5 0l-2 8.5q-4.5 1.5-9.5 0z" fill="#8cc63f"/><path d="M17 857.5q4.5-1.5 9 0l-1.8 8.5q-4.5-1.5-9 0z" fill="#29a8e0"/><path d="M27 859.5q4.5 1.5 9.5 0l-2 8.5q-4.5 1.5-9.5 0z" fill="#fdc010"/><defs><linearGradient id="ieg" x1="0" y1="0" x2="0" y2="1"><stop offset="0" stop-color="#1f8fd8"/><stop offset="0.6" stop-color="#1670c8"/><stop offset="1" stop-color="#5cc8f5"/></linearGradient></defs><text x="90.5" y="869" font-size="38" font-weight="bold" fill="url(#ieg)" stroke="#0a3c7a" stroke-width="0.6" text-anchor="middle" font-family="Liberation Sans">e</text><path d="M77 872q-6-3 4-14q10-11 19-13q5-1 3.5 4" fill="none" stroke="#f2b52a" stroke-width="2"/><defs><radialGradient id="ffg" cx="0.5" cy="0.4" r="0.6"><stop offset="0" stop-color="#2ea0e8"/><stop offset="1" stop-color="#173f8a"/></radialGradient></defs><circle cx="151" cy="858" r="15" fill="#e9651e"/><circle cx="154" cy="855" r="10" fill="url(#ffg)"/><path d="M138 853q2 13 13 16q10 2 15-7q-5 4-12 3q-7-1-9-7q3 1 6 0q-4-2-5-6q-3 0-8 1z" fill="#ec6a1e"/><path d="M162 846q5 5 4 12q-1-5-5-8z" fill="#f6c13a"/><path d="M140 849q1-4 4-5l1 4z" fill="#ec6a1e"/><rect x="183.5" y="838.5" width="54" height="38" rx="2" fill="#dfe9f3" stroke="#6f879f" opacity="0.95"/><rect x="238" y="839" width="3" height="38" fill="#c9d8e7" stroke="#7c93aa" stroke-width="0.5"/><path d="M195 845l17-3v32l-17-3z" fill="#1d7044"/><rect x="211" y="846" width="14" height="24" fill="#fff" stroke="#1d7044"/><path d="M214 850h9M214 854h9M214 858h9M214 862h9M214 866h9M218 847v22" stroke="#1d7044"/><path d="M199 852l6 10M205 852l-6 10" stroke="#fff" stroke-width="2"/><path d="M260 845l17-3v32l-17-3z" fill="#d04423"/><rect x="276" y="846" width="14" height="24" fill="#fff" stroke="#d04423"/><path d="M279 858h8M279 862h8M283 850a4 4 0 1 0 4 4h-4z" stroke="#d04423" fill="#d04423"/><text x="262.5" y="864.5" font-size="15" font-weight="bold" fill="#fff" font-family="Liberation Sans">P</text><path d="M322 845l17-3v32l-17-3z" fill="#31752f"/><rect x="338" y="846" width="14" height="24" fill="#fff" stroke="#31752f"/><path d="M342 850v10h6v6" stroke="#31752f" stroke-width="2" fill="none"/><text x="324.5" y="864.5" font-size="15" font-weight="bold" fill="#fff" font-family="Liberation Sans">P</text><path d="M384 845l17-3v32l-17-3z" fill="#3955a3"/><rect x="400" y="846" width="14" height="24" fill="#fff" stroke="#3955a3"/><path d="M403 856l4-4l4 4l-4 4zM403 866v-4h4" stroke="#3955a3" fill="none"/><text x="385.5" y="864.5" font-size="15" font-weight="bold" fill="#fff" font-family="Liberation Sans">V</text><path d="M446 845l17-3v32l-17-3z" fill="#2b579a"/><rect x="462" y="846" width="14" height="24" fill="#fff" stroke="#2b579a"/><path d="M465 850h9M465 854h9M465 858h9M465 862h9M465 866h9" stroke="#2b579a"/><text x="446.3" y="864.5" font-size="13.5" font-weight="bold" fill="#fff" font-family="Liberation Sans">W</text><rect x="493.5" y="838.5" width="54" height="38" rx="2" fill="#dfe9f3" stroke="#6f879f" opacity="0.95"/><rect x="548" y="839" width="3" height="38" fill="#c9d8e7" stroke="#7c93aa" stroke-width="0.5"/><path d="M504 848h10l2 2h20v22h-32z" fill="#e8c66a"/><rect x="507" y="846" width="5" height="3" fill="#5cb85c"/><rect x="516" y="847" width="5" height="3" fill="#d9534f"/><rect x="526" y="848" width="5" height="3" fill="#3a9ad9"/><rect x="506" y="851" width="28" height="8" fill="#fff"/><path d="M504 856h32v17h-32z" fill="#f5d98a"/><path d="M512 873v-6h16v6" stroke="#3ca0e0" stroke-width="3" fill="none"/><path d="M1102.5 861.5h8.5l-4.25-5z" fill="#fff"/><rect x="1123.5" y="851" width="2" height="15" fill="#fff"/><path d="M1125.5 852h12v8h-12z" fill="#fff"/><circle cx="1134" cy="862.5" r="4.2" fill="#e0282e" stroke="#fff" stroke-width="0.8"/><path d="M1132.3 860.8l3.4 3.4M1135.7 860.8l-3.4 3.4" stroke="#fff" stroke-width="1"/><rect x="1150.5" y="854.5" width="11" height="9" fill="#4d5d6d" stroke="#fff"/><rect x="1147" y="852" width="3" height="14" fill="#fff"/><rect x="1153" y="864" width="6" height="2" fill="#fff"/><path d="M1171.5 857h4l5-5v14l-5-5h-4z" fill="#fff"/><path d="M1182 855q3 3.5 0 7M1184.5 853q4.5 5.5 0 11" stroke="#fff" stroke-width="1.2" fill="none"/><rect x="1265.5" y="839.5" width="14" height="38" fill="#6a8099" stroke="#b8c8d8"/></svg>
<div class="t" style="left:112.50px;top:796.00px;font-size:12.5px;color:#217346;letter-spacing:-0.199px;font-weight:bold;">Sheet1</div>
<div class="t" style="left:7.50px;top:822.00px;font-size:11px;color:#444;letter-spacing:-0.324px;">Ready</div>
<div class="t" style="left:1243.50px;top:822.00px;font-size:11.3px;color:#444;letter-spacing:-0.534px;">100%</div>
<div class="t" style="left:1208.70px;top:845.00px;font-size:12.5px;color:#fff;letter-spacing:-0.709px;">2:51 PM</div>
<div class="t" style="left:1203.60px;top:862.00px;font-size:12.5px;color:#fff;letter-spacing:-0.526px;">1/16/2017</div></body></html>
